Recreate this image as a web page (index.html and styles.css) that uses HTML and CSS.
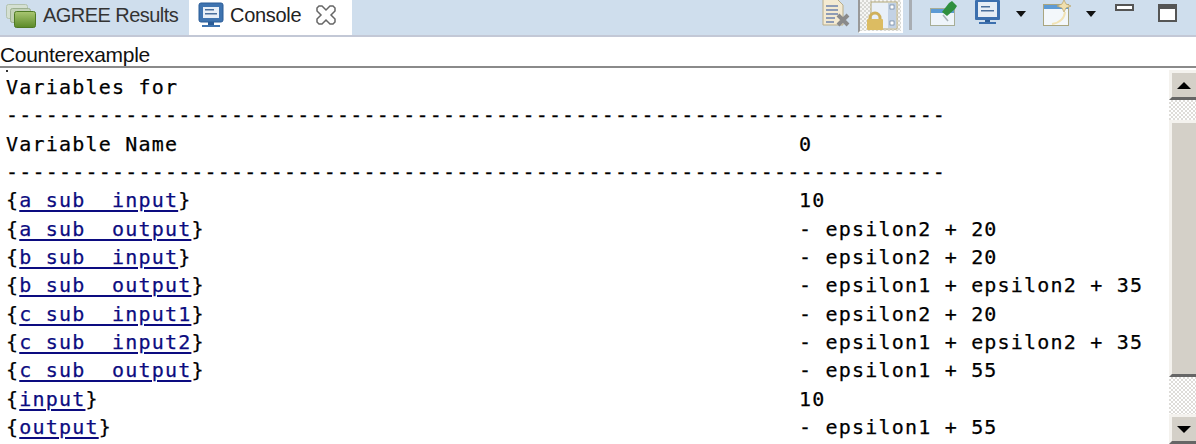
FILE: index.html
```html
<!DOCTYPE html>
<html lang="en">
<head>
  <meta charset="UTF-8" />
  <title>Console</title>
  <link rel="stylesheet" href="styles.css">
</head>
<body>
  <div class="tabbar">
    <div class="tab">
      <svg width="38" height="30" viewBox="0 0 38 30">
        <defs>
          <linearGradient id="folder" x1="0" y1="0" x2="0" y2="1">
            <stop offset="0" stop-color="#a9c672"/>
            <stop offset="1" stop-color="#5b8a28"/>
          </linearGradient>
        </defs>
        <rect x="6.5" y="4.5" width="21" height="14" rx="2" fill="#d5e0d2" stroke="#b3c2ae"/>
        <rect x="10.5" y="8.5" width="20" height="14" rx="2" fill="#c3d2b8" stroke="#9db090"/>
        <rect x="14.5" y="11.5" width="21" height="16" rx="2" fill="url(#folder)" stroke="#4f7a24"/>
      </svg>
      <span>AGREE Results</span>
    </div>
    <div class="tab active">
      <svg width="26" height="28" viewBox="0 0 26 28">
        <rect x="1" y="2" width="24" height="19" rx="2" fill="#3f74b0" stroke="#2b5c97"/>
        <rect x="5" y="6" width="16" height="11" fill="#e8eff7"/>
        <rect x="7" y="8" width="9" height="1.5" fill="#4a6f9c"/>
        <rect x="7" y="12" width="12" height="1.5" fill="#4a6f9c"/>
        <rect x="10" y="21" width="6" height="3" fill="#2b5c97"/>
        <rect x="4" y="24" width="18" height="2" fill="#3f74b0"/>
      </svg>
      <span>Console</span>
      <svg class="close" width="20" height="20" viewBox="0 0 20 20">
        <path d="M1 3 L3 1 L6 1 L10 5 L14 1 L17 1 L19 3 L19 6 L15 10 L19 14 L19 17 L17 19 L14 19 L10 15 L6 19 L3 19 L1 17 L1 14 L5 10 L1 6 Z" fill="#fff" stroke="#666" stroke-width="1.5"/>
      </svg>
    </div>
    <div class="toolbar">
      <svg width="30" height="28" viewBox="0 0 30 28">
        <path d="M1 -1 H15 L21 5 V25 H1 Z" fill="#f3ead2" stroke="#b9ad8a"/>
        <path d="M4 6 H16 M4 10 H16 M4 14 H16 M4 18 H13 M4 22 H12" stroke="#6d82ad" stroke-width="1.6"/>
        <path d="M16 15 L26 25 M26 15 L16 25" stroke="#8a8a8a" stroke-width="4"/>
      </svg>
      <div class="pressed">
        <svg width="38" height="32" viewBox="0 0 38 32">
          <rect x="11" y="2" width="26" height="27" fill="#e9f0f8" stroke="#b3a777"/>
          <rect x="28" y="3" width="8" height="25" fill="#c3d2e4"/>
          <rect x="30" y="5" width="4" height="4" fill="#fff" stroke="#55708f" stroke-width=".6"/>
          <rect x="30" y="21" width="4" height="4" fill="#fff" stroke="#55708f" stroke-width=".6"/>
          <path d="M10 20 V18 a5 5 0 0 1 10 0 V20" fill="none" stroke="#cfb05a" stroke-width="3"/>
          <rect x="7" y="19" width="16" height="11" rx="1" fill="#dcbc62"/>
        </svg>
      </div>
      <div class="sep"></div>
      <svg class="pin" width="28" height="28" viewBox="0 0 28 28">
        <rect x="0.5" y="8.5" width="24" height="17" fill="#eef4fa" stroke="#a7ad95"/>
        <rect x="1" y="9" width="23" height="4" fill="#5d9bd5"/>
        <path d="M12 12 L19 3 L22 1 L27 6 L25 9 L17 16 Z" fill="#2f8f3e"/>
        <path d="M13 15 L18 21" stroke="#a5b0b5" stroke-width="1.5"/>
      </svg>
      <svg class="monitor" width="26" height="26" viewBox="0 0 26 26">
        <rect x="0" y="0" width="25" height="20" rx="1" fill="#3c6fae"/>
        <rect x="3" y="2" width="19" height="15" fill="#e6edf5"/>
        <rect x="6" y="6" width="9" height="1.5" fill="#4a6f9c"/>
        <rect x="6" y="10" width="13" height="1.5" fill="#4a6f9c"/>
        <rect x="10" y="20" width="5" height="2" fill="#2b5c97"/>
        <rect x="4" y="22" width="17" height="2" fill="#3c6fae"/>
      </svg>
      <div class="arrow"></div>
      <svg class="newwin" width="30" height="28" viewBox="0 0 30 28">
        <rect x="0.5" y="4.5" width="25" height="21" fill="#f3f7fb" stroke="#a9a580"/>
        <rect x="1" y="5" width="24" height="4" fill="#5d9bd5"/>
        <path d="M21 0 L23 4 L28 6 L23 8 L21 12 L19 8 L14 6 L19 4 Z" fill="#f0dfae" stroke="#b9a468" stroke-width=".7"/>
        <path d="M22 12 Q21 22 9 24" fill="none" stroke="#f2e3b5" stroke-width="2"/>
      </svg>
      <div class="arrow arrow-last"></div>
      <div class="minimize"></div>
      <div class="maximize"></div>
    </div>
  </div>

  <div class="title-row">Counterexample</div>

  <div class="content">
    <div class="console">
      <span class="dot"></span>
      <div class="row">Variables for</div>
      <div class="row">-----------------------------------------------------------------------</div>
      <div class="row"><span class="col">Variable Name</span><span>0</span></div>
      <div class="row">-----------------------------------------------------------------------</div>
      <div class="row"><span class="col">{<a>a sub  input</a>}</span><span>10</span></div>
      <div class="row"><span class="col">{<a>a sub  output</a>}</span><span>- epsilon2 + 20</span></div>
      <div class="row"><span class="col">{<a>b sub  input</a>}</span><span>- epsilon2 + 20</span></div>
      <div class="row"><span class="col">{<a>b sub  output</a>}</span><span>- epsilon1 + epsilon2 + 35</span></div>
      <div class="row"><span class="col">{<a>c sub  input1</a>}</span><span>- epsilon2 + 20</span></div>
      <div class="row"><span class="col">{<a>c sub  input2</a>}</span><span>- epsilon1 + epsilon2 + 35</span></div>
      <div class="row"><span class="col">{<a>c sub  output</a>}</span><span>- epsilon1 + 55</span></div>
      <div class="row"><span class="col">{<a>input</a>}</span><span>10</span></div>
      <div class="row"><span class="col">{<a>output</a>}</span><span>- epsilon1 + 55</span></div>
    </div>
    <div class="scrollbar">
      <div class="sb-btn"><div class="tri-up"></div></div>
      <div class="sb-track sb-track-top"></div>
      <div class="sb-thumb"></div>
      <div class="sb-track"></div>
      <div class="sb-btn"><div class="tri-down"></div></div>
    </div>
  </div>
</body>
</html>
```

FILE: styles.css
```css
html, body {
  margin: 0;
  height: 444px;
  overflow: hidden;
  background: #fff;
}
body {
  font-family: "Liberation Sans", Arial, sans-serif;
  color: #111;
  display: flex;
  flex-direction: column;
}
.tabbar {
  height: 37px;
  flex: none;
  display: flex;
  background: #cfdeed;
  border-bottom: 2px solid #c3c8d6;
  box-sizing: border-box;
  overflow: hidden;
}
.tab {
  display: flex;
  align-items: center;
  gap: 5px;
  width: 189px;
  height: 37px;
  box-sizing: border-box;
  padding-bottom: 7px;
  font-size: 20px;
  color: #333;
  letter-spacing: -0.55px;
}
.tab.active {
  width: 163px;
  background: #fff;
  padding-left: 9px;
  gap: 6px;
  color: #222;
  letter-spacing: -0.3px;
}
.close {
  margin-left: 9px;
}
.toolbar {
  display: flex;
  align-items: flex-start;
  flex: 1;
  padding-left: 470px;
}
.pressed {
  margin-left: 6px;
  width: 45px;
  height: 33px;
  box-sizing: border-box;
  background: repeating-conic-gradient(#d8d8d4 0 25%, #f6f6f4 0 50%) 0 0 / 4px 4px;
  border-left: 2px solid #999;
  border-bottom: 2px solid #fff;
  border-right: 2px solid #fff;
}
.sep {
  width: 3px;
  height: 30px;
  background: #a8adb3;
  margin-left: 6px;
}
.pin { margin-left: 18px; }
.monitor { margin-left: 17px; }
.arrow {
  width: 0;
  height: 0;
  margin-left: 15px;
  margin-top: 11px;
  border-left: 5px solid transparent;
  border-right: 5px solid transparent;
  border-top: 6px solid #111;
}
.arrow-last { margin-left: 13px; }
.newwin { margin-left: 17px; }
.minimize {
  width: 15px;
  height: 3px;
  margin-left: 19px;
  margin-top: 4px;
  background: #fff;
  border: 2px solid #555;
}
.maximize {
  width: 15px;
  height: 11px;
  margin-left: 24px;
  margin-top: 4px;
  background: #fff;
  border: 2px solid #555;
  border-top-width: 5px;
}
.title-row {
  height: 31px;
  flex: none;
  box-sizing: border-box;
  font-size: 21px;
  line-height: 36px;
  letter-spacing: -0.3px;
  border-bottom: 2px solid #8a8a8a;
}
.content {
  flex: 1;
  display: flex;
  min-height: 0;
}
.console {
  flex: 1;
  padding: 5px 0 0 6px;
  overflow: hidden;
  font-family: "DejaVu Sans Mono", monospace;
  font-size: 20px;
  letter-spacing: 1.2px;
  line-height: 28.33px;
  color: #000;
  -webkit-text-stroke: 0.25px #000;
  position: relative;
}
.row {
  display: flex;
  white-space: pre;
}
.col {
  width: 793px;
  flex: none;
}
.console a {
  color: #0c0c80;
  -webkit-text-stroke-color: #0c0c80;
  text-decoration: underline;
  text-decoration-thickness: 2px;
  text-underline-offset: 3px;
}
.dot {
  position: absolute;
  left: 6px;
  top: 2px;
  width: 2px;
  height: 2px;
  background: #333;
}
.scrollbar {
  width: 27px;
  flex: none;
  display: flex;
  flex-direction: column;
  margin-top: 2px;
  background: #d4d0c8;
}
.sb-btn {
  height: 30px;
  flex: none;
  display: flex;
  align-items: center;
  justify-content: center;
  box-sizing: border-box;
  background: #d4d0c8;
  border-left: 3px solid #f4f2ee;
  border-top: 3px solid #f4f2ee;
  border-bottom: 3px solid #666;
}
.sb-thumb {
  height: 257px;
  flex: none;
  box-sizing: border-box;
  background: #d4d0c8;
  border-left: 3px solid #f4f2ee;
  border-top: 3px solid #f4f2ee;
  border-bottom: 3px solid #666;
}
.sb-track {
  flex: 1;
  background: repeating-conic-gradient(#dedcd8 0 25%, #fff 0 50%) 0 0 / 4px 4px;
}
.sb-track-top {
  flex: none;
  height: 20px;
}
.tri-up {
  border-left: 7px solid transparent;
  border-right: 7px solid transparent;
  border-bottom: 7px solid #000;
}
.tri-down {
  border-left: 7px solid transparent;
  border-right: 7px solid transparent;
  border-top: 7px solid #000;
}
```
